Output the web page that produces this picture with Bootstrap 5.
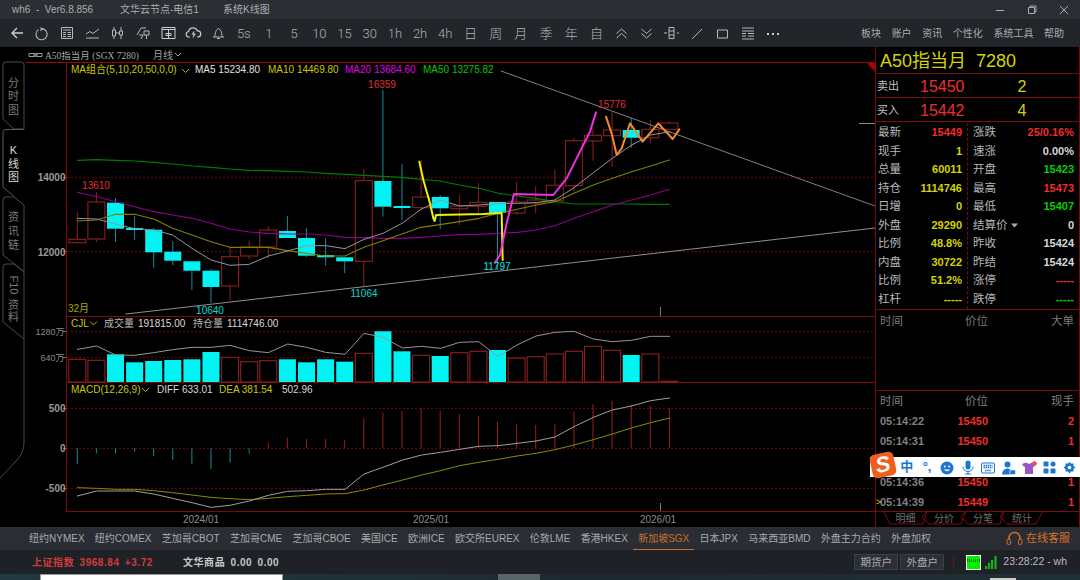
<!DOCTYPE html>
<html lang="zh">
<head>
<meta charset="utf-8">
<title>wh6</title>
<link href="https://cdn.jsdelivr.net/npm/bootstrap@5.3.0/dist/css/bootstrap.min.css" rel="stylesheet">
<style>
html,body{margin:0;background:#000;overflow:hidden}
body{font-family:"Liberation Sans","Noto Sans CJK SC",sans-serif;width:1080px;height:580px}
.wh-root{width:1080px;height:580px;position:relative}
.wh-title{height:19px;background:#2b2e33;color:#a9adb1;font-size:10px;padding-left:12px}
.wh-title .wh-t1{width:108px}.wh-title .wh-t2{width:103px}
.wh-win{width:32px;text-align:center;color:#a9adb1}
.wh-tool{height:28px;background:#22252a;color:#aeb2b6;padding-left:4.5px}
.wh-tb{width:25.2px;text-align:center;font-family:Roboto,"Noto Sans CJK SC",sans-serif;font-weight:300;font-size:13px;line-height:1;flex:none}
.wh-menu{font-size:10px;gap:10.6px;padding-right:16px;color:#a9adb1;padding-top:1px}
.wh-main{height:480px;background:#000}
.wh-chart{width:875px;height:480px;display:block;flex:none}
.wh-chart text{font-family:"Liberation Sans","Noto Sans CJK SC",sans-serif}
.wh-panel{width:205px;height:480px;border-right:1px solid #7d0a0a;flex:none;border-left:1px solid #7d0a0a}
.wh-name{height:26px;color:#d4d400;font-size:18px;line-height:28px;padding-left:4px;white-space:pre}
.wh-quote{height:24px;border-top:1px solid #7d0a0a;color:#c4c4c4;font-size:11px;padding:2px 0 0 1px}
.wh-quote .wh-qp{color:#f02c2c;font-size:16px;padding-left:43px;width:60px;box-sizing:content-box}
.wh-quote .wh-ql{width:0;flex:none;white-space:nowrap}
.wh-quote .wh-qn{color:#d4d400;font-size:16px;width:74px;text-align:center;padding-left:10px}
.wh-stats{height:189px;border-top:1px solid #7d0a0a;border-bottom:1px solid #7d0a0a;padding-top:1px}
.wh-col1{width:92px;border-right:1px dashed #7d0a0a;padding:0 5px 0 2px}
.wh-col2{width:111px;padding:0 5px 0 5px}
.wh-row{height:18.55px;font-size:11.5px;color:#b8b8b8;line-height:18.5px}
.wh-row b{font-size:11px;font-weight:700}
.wh-y{color:#d4d400}.wh-r{color:#f02c2c}.wh-g{color:#00d000}.wh-w{color:#d8d8d8}
.wh-big{height:81px;color:#7a7a7a;font-size:11.5px;padding:3px 5px 0 4px;border-bottom:1px solid #7d0a0a}
.wh-detail{height:120px;color:#808080;font-size:11px;padding:0 5px 0 4px;position:relative}
.wh-head{height:20px;line-height:20px;font-size:11.5px}
.wh-drow{height:20.3px;line-height:20px;font-weight:700;color:#808080}
.wh-tc{width:50px;flex:none}
.wh-pw{width:58px;text-align:right;flex:none}
.wh-qty{margin-left:auto}
.wh-cur{position:absolute;left:0;color:#d4d400;font-size:9px;bottom:2px}
.wh-ptabs{height:16px;display:block;width:203px;flex:none}
.wh-ptabs text{font-family:"Liberation Sans","Noto Sans CJK SC",sans-serif}
.wh-tabs{height:23px;background:#2a2d33;color:#a6aaae;font-size:10px;padding-left:29px;gap:10.3px;white-space:nowrap}
.wh-tab{line-height:23px;height:23px;position:relative}
.wh-on{color:#c9702c;border-bottom:1px solid #c9702c;margin:0 -5px;padding:0 5px}
.wh-online{color:#d8702a;font-size:11px;padding-right:10px;gap:3px}
.wh-status{height:24px;background:#1e2126;font-size:10px;padding-left:32px;white-space:nowrap}
.wh-idx{color:#d43a3a;letter-spacing:.55px;word-spacing:2px;width:151px;font-weight:700}
.wh-com{color:#c8c8c8;letter-spacing:.55px;word-spacing:2px;font-weight:700}
.wh-btn{height:16px;line-height:15px;background:#2c3036;border:1px solid #3c4046;color:#a9adb1;font-size:10.5px;padding:0 5px;margin-right:2px;width:44px;text-align:center}
.wh-sep{width:1px;height:12px;background:#6a1414;margin:0 12px 0 7px}
.wh-time{color:#b8bcc0;font-size:10.5px;padding-right:13px;margin-left:5px}
.wh-strip{height:6px;background:linear-gradient(90deg,#22393f,#1c2a30 55%,#1e2f35);overflow:hidden}
.wh-white{width:243px;height:6px;background:#fff;margin-left:40px;border:1px solid #999;border-bottom:0}
.wh-gray{width:42px;height:6px;background:#58666a;margin-left:215px}
.wh-clock{width:26px;height:2px;margin-left:450px;margin-top:4px;background:#ccc}
.wh-ime{position:absolute;left:870px;top:457px;width:210px;height:20px;background:#fff;gap:0;padding-left:26.500px}
.wh-ime-i{width:20.4px;text-align:center;color:#1b76d2;font-size:13px;font-weight:700;line-height:20px;flex:none}
.wh-logo{position:absolute;left:871px;top:453px;width:24px;height:24px;background:#f0601c;border-radius:5px;transform:rotate(-12deg);color:#fff;font:italic 700 22px/24px "Liberation Sans",sans-serif;text-align:center}
</style>
</head>
<body>
<div class="wh-root d-flex flex-column">

<div class="wh-title d-flex align-items-center flex-none">
  <span class="wh-t1">wh6&nbsp; - &nbsp;Ver6.8.856</span>
  <span class="wh-t2">文华云节点-电信1</span>
  <span>系统K线图</span>
  <span class="ms-auto d-flex">
    <span class="wh-win"><svg width="10" height="10"><path d="M1 5.5H9" stroke="#a9adb1"/></svg></span>
    <span class="wh-win"><svg width="10" height="10"><path d="M1.5 2.5h6v6h-6z M3 2.5V1h6v6H7.5" stroke="#a9adb1" fill="none"/></svg></span>
    <span class="wh-win"><svg width="10" height="10"><path d="M1 1L9 9M9 1L1 9" stroke="#a9adb1"/></svg></span>
  </span>
</div>

<div class="wh-tool d-flex align-items-center">
  <span class="wh-tb"><svg width="14" height="14"><path d="M13 7H2M7 2L2 7L7 12" stroke="#c8ccd0" stroke-width="1.4" fill="none"/></svg></span>
  <span class="wh-tb"><svg width="15" height="15"><path d="M5 1.6L7.6 3.2L5.2 4.6M7 2.6A5.6 5.6 0 1 1 3.3 3.6" stroke="#b4b8bc" fill="none" stroke-width="1.1"/></svg></span>
  <span class="wh-tb"><svg width="14" height="14"><path d="M1.5 1.5h11v11h-11zM3 4h8M3 6.5h3M7.5 6.5H11M3 8.5h3M7.5 8.5H11M3 10.5h3M7.5 10.5H11" stroke="#b4b8bc" fill="none"/></svg></span>
  <span class="wh-tb"><svg width="15" height="14"><path d="M1 8L5 5.5L8 7.5L14 3M1 12H14" stroke="#b4b8bc" fill="none"/></svg></span>
  <span class="wh-tb"><svg width="15" height="14"><path d="M2.5 4h3v6h-3zM4 1v3M4 10v3M9.5 5h3v4h-3zM11 1v4M11 9v4M5.5 7h4" stroke="#b4b8bc" fill="none"/></svg></span>
  <span class="wh-tb"><svg width="15" height="14"><path d="M1 9L5 2H10M3 9H7L5 13M8 5h5v4H8zM10.5 9v4" stroke="#b4b8bc" fill="none"/></svg></span>
  <span class="wh-tb"><svg width="15" height="14"><path d="M1 1.5H14V12.5H1zM1 3.5H14M5 7.5H10V9.5H5zM7.5 4V12" stroke="#c8ccd0" fill="none"/></svg></span>
  <span class="wh-tb"><svg width="17" height="14"><path d="M5 11H3.5A2.8 2.8 0 0 1 3.5 5.5A4.6 4.6 0 0 1 12.4 5A3 3 0 0 1 13 11H12" stroke="#c8ccd0" fill="none" stroke-width="1.2"/><path d="M9.5 4.5L6.5 8.5H8.5L7.5 12.5L11 7.8H9z" fill="#c8ccd0"/></svg></span>
  <span class="wh-tb"><svg width="13" height="14"><path d="M1 11H12M2.5 11C3.5 9.5 2.8 4 6.500 2.500C10.200 4 9.500 9.500 10.500 11M5 12.500H8" stroke="#b4b8bc" fill="none"/></svg></span>
  <span class="wh-tb">5s</span><span class="wh-tb">1</span><span class="wh-tb">5</span><span class="wh-tb">10</span><span class="wh-tb">15</span><span class="wh-tb">30</span><span class="wh-tb">1h</span><span class="wh-tb">2h</span><span class="wh-tb">4h</span><span class="wh-tb">日</span><span class="wh-tb">周</span><span class="wh-tb">月</span><span class="wh-tb">季</span><span class="wh-tb">年</span><span class="wh-tb">自</span>
  <span class="wh-tb"><svg width="13" height="13"><path d="M1.500 6.500L6.500 2L11.500 6.500M1.500 11L6.500 6.500L11.500 11" stroke="#b4b8bc" fill="none"/></svg></span>
  <span class="wh-tb"><svg width="13" height="13"><path d="M1.500 2L6.500 6.500L11.500 2M1.500 6.500L6.500 11L11.500 6.500" stroke="#b4b8bc" fill="none"/></svg></span>
  <span class="wh-tb"><svg width="17" height="14"><path d="M6 1.500h5v11H6zM6 5h5M6 9h5M1 7h3M14 7h2" stroke="#b4b8bc" fill="none"/></svg></span>
  <span class="wh-tb"><svg width="12" height="12"><path d="M1 11L11 1" stroke="#b4b8bc"/></svg></span>
  <span class="wh-tb"><svg width="13" height="12"><path d="M1.500 2h10v8h-10z" stroke="#b4b8bc" fill="none"/></svg></span>
  <span class="wh-tb"><svg width="14" height="13"><path d="M1 1H13M1 4H13M1 6.500H5M7 6.500H13M1 9H5M7 9H13M1 12H13" stroke="#b4b8bc" fill="none"/></svg></span>
  <span class="wh-tb"><svg width="14" height="4"><path d="M1 2H3M6 2H8M11 2H13" stroke="#c8ccd0" stroke-width="2"/></svg></span>
  <div class="wh-menu ms-auto d-flex">
    <span>板块</span><span>账户</span><span>资讯</span><span>个性化</span><span>系统工具</span><span>帮助</span>
  </div>
</div>

<div class="wh-main d-flex">
  <svg id="wh-chart" class="wh-chart" viewBox="0 47 875 480" xmlns="http://www.w3.org/2000/svg">
    <g id="wh-grid"></g>
    <g id="wh-candles"></g>
    <g id="wh-lines"></g>
    <g font-size="10" fill="#b4b4b4">
      <text x="45" y="58.500" font-size="9.500" fill="#a8a8a8" style="font-family:'Liberation Serif','Noto Sans CJK SC',serif">A50指当月 (SGX 7280)</text>
      <text x="153" y="58.500" fill="#a0a0a0">月线</text>
      <path d="M175 53l3 3 3-3" stroke="#a0a0a0" fill="none"/>
      <path d="M29 53.500h6v3h-6zM36 53.500h6v3h-6zM33 55h5" stroke="#9a9a9a" fill="none"/>
      <text x="71" y="73" fill="#c8c800">MA组合(5,10,20,50,0,0)</text>
      <path d="M182 69l3.500 3.500 3.500-3.500" stroke="#b0b000" fill="none"/>
      <text x="195" y="73" fill="#e0e0e0">MA5 15234.80</text>
      <text x="268" y="73" fill="#c8c800">MA10 14469.80</text>
      <text x="345" y="73" fill="#e000e0">MA20 13684.60</text>
      <text x="423" y="73" fill="#00c800">MA50 13275.82</text>
      <text x="382" y="87.500" fill="#e03030" text-anchor="middle">16359</text>
      <text x="96" y="189" fill="#e03030" text-anchor="middle">13610</text>
      <text x="612" y="108" fill="#e03030" text-anchor="middle">15776</text>
      <text x="210" y="313.500" fill="#00d8d8" text-anchor="middle">10640</text>
      <text x="364" y="297" fill="#00d8d8" text-anchor="middle">11064</text>
      <text x="497" y="270" fill="#00e8e8" text-anchor="middle">11797</text>
      <text x="68" y="312" fill="#a8a800">32月</text>
      <g text-anchor="end" font-weight="700" fill="#9a9a9a">
        <text x="65.500" y="181">14000</text><text x="65.500" y="255.500">12000</text>
        <text x="65.500" y="412">500</text><text x="65.500" y="452">0</text><text x="65.500" y="492">-500</text>
      </g>
      <g text-anchor="end" fill="#8a8a8a" font-size="9">
        <text x="64.500" y="334.500">1280万</text><text x="64.500" y="360.500">640万</text>
      </g>
      <text x="71" y="326.500" fill="#c8c800">CJL</text>
      <path d="M90 321.500l3.500 3.500 3.500-3.500" stroke="#b0b000" fill="none"/>
      <text x="104" y="326.500" fill="#b8b8b8">成交量</text><text x="138" y="326.500" fill="#d8d8d8">191815.00</text>
      <text x="193" y="326.500" fill="#b8b8b8">持仓量</text><text x="227" y="326.500" fill="#d8d8d8">1114746.00</text>
      <text x="71" y="392.500" fill="#c8c800">MACD(12,26,9)</text>
      <path d="M142 388l3.500 3.500 3.500-3.500" stroke="#b0b000" fill="none"/>
      <text x="157" y="392.500" fill="#d8d8d8">DIFF 633.01</text>
      <text x="219" y="392.500" fill="#c8c800">DEA 381.54</text>
      <text x="282" y="392.500" fill="#d8d8d8">502.96</text>
      <g text-anchor="middle" fill="#8c8c8c">
        <text x="201" y="523">2024/01</text><text x="431" y="523">2025/01</text><text x="658" y="523">2026/01</text>
      </g>
    </g>
    <g fill="#000" stroke="#4a4a4a">
      <path d="M6 62H21Q24 62 24 65V129H14L3 119V65Q3 62 6 62z"/>
      <path d="M6 197H14L24 205V271.500L3 255V200Q3 197 6 197z"/>
      <path d="M6 264H14L24 272V339L3 322V267Q3 264 6 264z"/>
      <path d="M24 129.500H6Q3 129.500 3 132.500V187L14 196.500" stroke="#5a5a5a"/>
      <path d="M24 339V443Q24 452 17 460L0 478" fill="none"/>
    </g>
    <g font-size="11" text-anchor="middle" fill="#7c7c7c">
      <text x="13.500" y="87">分</text><text x="13.500" y="100">时</text><text x="13.500" y="114">图</text>
      <g fill="#d8d8d8"><text x="13.500" y="154">K</text><text x="13.500" y="168">线</text><text x="13.500" y="181">图</text></g>
      <text x="13.500" y="221">资</text><text x="13.500" y="235">讯</text><text x="13.500" y="249">链</text>
      <text transform="translate(10 285) rotate(90)">F10</text><text x="13.500" y="309">资</text><text x="13.500" y="321">料</text>
    </g>
    <path d="M867 63H875.500V72z" fill="#b00000"/>
  </svg>

  <div class="wh-panel d-flex flex-column">
    <div class="wh-name">A50指当月  7280</div>
    <div class="wh-quote d-flex align-items-center"><span class="wh-ql">卖出</span><span class="wh-qp">15450</span><span class="wh-qn">2</span></div>
    <div class="wh-quote d-flex align-items-center"><span class="wh-ql">买入</span><span class="wh-qp">15442</span><span class="wh-qn">4</span></div>
    <div class="wh-stats d-flex">
      <div class="wh-col1">
        <div class="wh-row d-flex justify-content-between"><span>最新</span><b class="wh-r">15449</b></div>
        <div class="wh-row d-flex justify-content-between"><span>现手</span><b class="wh-y">1</b></div>
        <div class="wh-row d-flex justify-content-between"><span>总量</span><b class="wh-y">60011</b></div>
        <div class="wh-row d-flex justify-content-between"><span>持仓</span><b class="wh-y">1114746</b></div>
        <div class="wh-row d-flex justify-content-between"><span>日增</span><b class="wh-y">0</b></div>
        <div class="wh-row d-flex justify-content-between"><span>外盘</span><b class="wh-y">29290</b></div>
        <div class="wh-row d-flex justify-content-between"><span>比例</span><b class="wh-y">48.8%</b></div>
        <div class="wh-row d-flex justify-content-between"><span>内盘</span><b class="wh-y">30722</b></div>
        <div class="wh-row d-flex justify-content-between"><span>比例</span><b class="wh-y">51.2%</b></div>
        <div class="wh-row d-flex justify-content-between"><span>杠杆</span><b class="wh-y">-----</b></div>
      </div>
      <div class="wh-col2">
        <div class="wh-row d-flex justify-content-between"><span>涨跌</span><b class="wh-r">25/0.16%</b></div>
        <div class="wh-row d-flex justify-content-between"><span>速涨</span><b class="wh-w">0.00%</b></div>
        <div class="wh-row d-flex justify-content-between"><span>开盘</span><b class="wh-g">15423</b></div>
        <div class="wh-row d-flex justify-content-between"><span>最高</span><b class="wh-r">15473</b></div>
        <div class="wh-row d-flex justify-content-between"><span>最低</span><b class="wh-g">15407</b></div>
        <div class="wh-row d-flex justify-content-between"><span>结算价 <svg width="7" height="5"><path d="M0 0.500H7L3.500 4.500z" fill="#a8a8a8"/></svg></span><b class="wh-w">0</b></div>
        <div class="wh-row d-flex justify-content-between"><span>昨收</span><b class="wh-w">15424</b></div>
        <div class="wh-row d-flex justify-content-between"><span>昨结</span><b class="wh-w">15424</b></div>
        <div class="wh-row d-flex justify-content-between"><span>涨停</span><b class="wh-r">-----</b></div>
        <div class="wh-row d-flex justify-content-between"><span>跌停</span><b class="wh-g">-----</b></div>
      </div>
    </div>
    <div class="wh-big d-flex"><span class="wh-tc">时间</span><span class="wh-pw">价位</span><span class="wh-qty">大单</span></div>
    <div class="wh-detail">
      <div class="wh-head d-flex"><span class="wh-tc">时间</span><span class="wh-pw">价位</span><span class="wh-qty">现手</span></div>
      <div class="wh-drow d-flex"><span class="wh-tc">05:14:22</span><span class="wh-pw wh-r">15450</span><span class="wh-r wh-qty">2</span></div>
      <div class="wh-drow d-flex"><span class="wh-tc">05:14:31</span><span class="wh-pw wh-r">15450</span><span class="wh-r wh-qty">1</span></div>
      <div class="wh-drow d-flex"><span class="wh-tc">05:14:33</span><span class="wh-pw wh-r">15449</span><span class="wh-r wh-qty">1</span></div>
      <div class="wh-drow d-flex"><span class="wh-tc">05:14:36</span><span class="wh-pw wh-r">15450</span><span class="wh-r wh-qty">1</span></div>
      <div class="wh-drow d-flex"><span class="wh-tc">05:14:39</span><span class="wh-pw wh-r">15449</span><span class="wh-r wh-qty">1</span></div>
      <span class="wh-cur">&gt;</span>
    </div>
    <svg class="wh-ptabs" viewBox="0 0 203 16">
      <path d="M0 .5H203" stroke="#7d0a0a"/>
      <path d="M7.500 0L14 13H47L51 0M51 0L46 6L53 13H85L90 0M90 0L85 6L92 13H124L128 0M128 0L124 6L131 13H160L167 0" fill="none" stroke="#7d0a0a"/>
      <g font-size="10" fill="#6e6e6e" text-anchor="middle"><text x="29.500" y="10.500">明细</text><text x="68" y="10.500">分价</text><text x="107" y="10.500">分笔</text><text x="146" y="10.500">统计</text></g>
    </svg>
  </div>
</div>

<div class="wh-tabs d-flex align-items-start">
  <span class="wh-tab">纽约NYMEX</span><span class="wh-tab">纽约COMEX</span><span class="wh-tab">芝加哥CBOT</span><span class="wh-tab">芝加哥CME</span><span class="wh-tab">芝加哥CBOE</span><span class="wh-tab">美国ICE</span><span class="wh-tab">欧洲ICE</span><span class="wh-tab">欧交所EUREX</span><span class="wh-tab">伦敦LME</span><span class="wh-tab">香港HKEX</span><span class="wh-tab wh-on">新加坡SGX</span><span class="wh-tab">日本JPX</span><span class="wh-tab">马来西亚BMD</span><span class="wh-tab">外盘主力合约</span><span class="wh-tab">外盘加权</span>
  <span class="wh-online ms-auto d-flex align-items-center wh-tab">
    <svg width="17" height="15"><path d="M3 9V7A5.500 5.500 0 0 1 14 7V9" stroke="#d8702a" fill="none" stroke-width="1.400"/><rect x="1" y="8" width="3.500" height="5.500" rx="1.500" stroke="#d8702a" fill="none"/><rect x="12.500" y="8" width="3.500" height="5.500" rx="1.500" stroke="#d8702a" fill="none"/></svg>
    在线客服</span>
</div>

<div class="wh-status d-flex align-items-center">
  <span class="wh-idx">上证指数 3968.84 +3.72</span>
  <span class="wh-com">文华商品 0.00 0.00</span>
  <span class="wh-btn ms-auto">期货户</span><span class="wh-btn">外盘户</span>
  <span class="wh-sep"></span>
  <svg width="15" height="15"><rect width="15" height="15" fill="#fff"/><rect x="1" y="1" width="13" height="13" fill="#00f000"/><path d="M1 5.500H14" stroke="#0a7a0a" stroke-width="3" stroke-dasharray="1 1"/></svg>
  <svg class="ms-1" width="13" height="15"><path d="M1 11v3M4 8v6M7 5v9M10.500 1v13" stroke="#17b017" stroke-width="2.200"/></svg>
  <span class="wh-time">23:28:22 - wh</span>
</div>

<div class="wh-strip d-flex">
  <div class="wh-white"></div><div class="wh-gray"></div><div class="wh-clock"></div>
</div>

<div class="wh-ime d-flex">
  <span class="wh-ime-i">中</span>
  <span class="wh-ime-i">°,</span>
  <span class="wh-ime-i"><svg width="14" height="14"><circle cx="7" cy="7" r="6.500" fill="#1b76d2"/><circle cx="4.800" cy="5.500" r="1" fill="#fff"/><circle cx="9.200" cy="5.500" r="1" fill="#fff"/><path d="M3.800 8.500Q7 12 10.200 8.500z" fill="#fff"/></svg></span>
  <span class="wh-ime-i"><svg width="12" height="15"><rect x="3.500" y="0.500" width="5" height="9" rx="2.500" fill="#1b76d2"/><path d="M1 6.500A5 5 0 0 0 11 6.500M6 11.500V14M3 14H9" stroke="#1b76d2" fill="none"/></svg></span>
  <span class="wh-ime-i"><svg width="14" height="12"><rect x="0.500" y="1" width="13" height="10" rx="1" fill="none" stroke="#1b76d2"/><path d="M2.500 3.500H11.500M2.500 5.500H11.500M4 8.500H10" stroke="#1b76d2" stroke-dasharray="1.500 .6" stroke-width="1.300"/></svg></span>
  <span class="wh-ime-i"><svg width="14" height="14"><circle cx="5.500" cy="3.500" r="3" fill="#1b76d2"/><path d="M0 13.500A5.500 6 0 0 1 11 13.500z" fill="#1b76d2"/><rect x="8" y="9" width="5.500" height="4.500" fill="#1b76d2" stroke="#fff" stroke-width=".6"/></svg></span>
  <span class="wh-ime-i"><svg width="16" height="14"><path d="M1 3L5 1.500L8 3L11 1.500L15 3L13 6L12 5.500V13H4V5.500L3 6z" fill="#9a55c8"/><circle cx="13.500" cy="2.500" r="2.300" fill="#f05030"/></svg></span>
  <span class="wh-ime-i"><svg width="13" height="13"><rect x="0.500" y="0.500" width="5" height="5" rx="1" fill="#1b76d2"/><rect x="7.500" y="0.500" width="5" height="5" rx="2.500" fill="#1b76d2"/><rect x="0.500" y="7.500" width="5" height="5" rx="1" fill="#1b76d2"/><rect x="7.500" y="7.500" width="5" height="5" rx="1" fill="#1b76d2"/></svg></span>
  <span class="wh-ime-i"><svg width="13" height="13"><path d="M6.500 1L8 2.500L10.500 2.500L10.500 5L12.500 6.500L10.500 8L10.500 10.500L8 10.500L6.500 12.500L5 10.500L2.500 10.500L2.500 8L.5 6.500L2.500 5L2.500 2.500L5 2.500z" fill="#1b76d2"/><circle cx="6.500" cy="6.500" r="1.800" fill="#fff"/></svg></span>
</div>
<div class="wh-logo">S</div>
</div>

<script src="https://cdn.jsdelivr.net/npm/bootstrap@5.3.0/dist/js/bootstrap.bundle.min.js"></script>
<script>
(function(){
var NS='http://www.w3.org/2000/svg';
function el(p,t,a){var e=document.createElementNS(NS,t);for(var k in a)e.setAttribute(k,a[k]);p.appendChild(e);return e;}
var G=document.getElementById('wh-grid'),C=document.getElementById('wh-candles'),L=document.getElementById('wh-lines');
var RED='#7d0a0a',DOT='#6a0404';
function h(y,x1,x2,c,d){var a={x1:x1,x2:x2,y1:y,y2:y,stroke:c};if(d)a['stroke-dasharray']=d;el(G,'line',a);}
function v(x,y1,y2,c){el(G,'line',{x1:x,x2:x,y1:y1,y2:y2,stroke:c});}
h(62.5,25,875,'#8a0a0a');h(316.5,66,875,RED);h(382.5,66,875,RED);h(511.5,66,875,RED);v(66.5,62,511,RED);
[177.5,251.5,331.5,357.5,408.5,448.5,488.5].forEach(function(y){h(y,67,875,DOT,'2 2');});
[177.5,251.5,331.5,357.5,408.5,448.5,488.5].forEach(function(y){h(y,63,66,'#777');});
v(660.5,307,316,'#777');v(660.5,503,511,'#777');h(123.5,859,875,'#888');
// candles: centre step 19.1
var D=[[239.3,242.7,212,244,1],[202,239,192,242,1],[202.7,228.7,198,242,0],[228,230,216,240,0],[229.7,252.3,228,268,0],[251.7,260.7,241,265,0],[261.3,270.7,260.7,290,0],[270.7,287,269,303,0],[256.7,286,248,300,1],[247,256,240.7,259,1],[230,247,226,258,1],[231,238,216,238,0],[238,255.7,228,257,0],[255,257.3,238,265.7,0],[257.3,261.3,257,273,0],[180.7,261.3,169,287,1],[181,206.7,90,216.7,0],[206,208,164,220,0],[197,207.7,160,210,1],[197,208.3,195,229,0],[206,208.7,195,225,1],[202.3,206.3,183,213,1],[202,213,202,270,0],[202,213,181.7,215,1],[200,203,186,213,1],[185.3,200.7,170,200,1],[140.700,185.700,138,191.700,1],[135.300,141,128,160.700,1],[130,135.700,111.700,166.700,1],[130,137.700,118,148,0],[129.300,137.700,120,143,1],[123,129.300,121,129.300,1]];
var VOL=[359.3,360.3,354.3,362.3,361,360,359.3,352,357.3,361.7,360.7,359.3,362.3,359.3,361.7,353.3,331.3,351.3,355.3,356,352.7,351.3,350,358,356.7,354,351.3,346.3,350.3,355,354,381.3];
var HIST=[462,430,430,425,438,450,462,477,458,431,400,383,387,387,391,325,308,303,295,303,312,318,336,341,345,341,305,283,273,283,288,295];
function cx(i){return 77.3+i*19.1;}
var CR='#8c2020',CW='#0b8f96',CY='#00f4f4';
D.forEach(function(d,i){
  var x=cx(i),up=d[4],wc=up?CR:CW;
  el(C,'line',{x1:x,x2:x,y1:d[2],y2:d[0],stroke:wc});
  el(C,'line',{x1:x,x2:x,y1:d[1],y2:d[3],stroke:wc});
  el(C,'rect',up?{x:x-8.5,y:d[0],width:17,height:d[1]-d[0],fill:'#000',stroke:CR,'stroke-width':1.1}:{x:x-8.5,y:d[0],width:17,height:d[1]-d[0],fill:CY});
  var vt=VOL[i];
  el(C,'rect',up?{x:x-8.5,y:vt,width:17,height:382-vt,fill:'#000',stroke:CR,'stroke-width':1.1}:{x:x-8.5,y:vt,width:17,height:382-vt,fill:CY});
  var hy=310+HIST[i]/3;
  el(C,'line',{x1:x,x2:x,y1:448.3,y2:hy,stroke:hy<448?'#982020':CW});
});
function P(pts,c,w){el(L,'polyline',{points:pts.map(function(p){return p[0]+','+p[1];}).join(' '),fill:'none',stroke:c,'stroke-width':w||1,'stroke-linejoin':'round','stroke-linecap':'round'});}
function Z(ox,oy,a){return a.map(function(p){return [ox+p[0]/3,oy+p[1]/3];});}
// trend lines
P([[501,71],[875,206]],'#808080');P([[126,314],[875,228]],'#909090');
// MA
P(Z(60,120,[[52,121],[110,119],[167,121],[224,123],[281,127],[338,132],[396,138],[453,142],[510,147],[568,151],[625,152],[683,154],[740,156],[797,160],[855,163],[912,166],[969,169],[1026,172],[1083,178],[1140,183]]).concat(Z(400,90,[[178,285],[237,295],[295,310],[352,318],[408,325],[465,335],[522,342],[580,342],[637,342],[695,342],[752,343],[808,343]])),'#007c00',1.1);
P(Z(60,120,[[52,217],[110,230],[167,245],[224,260],[281,275],[338,285],[396,295],[453,310],[510,327],[568,336],[625,340],[683,342],[740,342],[797,345],[855,352],[912,353],[969,355],[1026,355],[1083,352],[1140,348]]).concat(Z(400,90,[[178,434],[237,433],[295,430],[352,427],[408,420],[465,407],[522,385],[580,365],[637,345],[695,330],[752,315],[808,298]])),'#900090',1.1);
P(Z(60,120,[[52,303],[110,300],[167,283],[224,283],[281,297],[338,325],[396,345],[453,365],[510,382],[568,382],[625,382],[683,392],[740,400],[797,408],[855,408],[912,382],[969,362],[1026,342],[1083,322],[1140,314]]).concat(Z(400,90,[[178,395],[237,385],[295,370],[352,358],[408,345],[465,335],[522,310],[580,285],[637,265],[695,245],[752,228],[808,210]])),'#808000',1.1);
P(Z(60,120,[[52,295],[110,297],[167,312],[224,326],[281,330],[338,345],[396,385],[453,420],[510,436],[568,433],[625,408],[683,393],[740,377],[797,377],[855,386],[912,358],[969,340],[1026,310],[1083,268],[1140,240]]).concat(Z(400,90,[[178,348],[237,345],[295,340],[352,340],[408,338],[465,330],[522,293],[580,248],[637,205],[695,165],[752,135],[810,125]])),'#969696',1);
// hand drawn
P(Z(400,90,[[58,215],[70,270],[90,340],[100,385],[104,393],[108,375],[250,372],[305,369],[308,510]]),'#f0f000',2);
P(Z(400,90,[[285,518],[300,495],[320,400],[342,312],[460,315],[500,265],[570,125],[588,67]]),'#f030e0',2);
P(Z(400,90,[[618,80],[635,130],[650,195],[665,175],[690,100],[728,155],[775,100],[818,147],[838,118]]),'#f08a30',2);
// volume line and macd
P(Z(60,310,[[52,118],[110,108],[167,135],[224,136],[281,128],[338,119],[396,112],[453,112],[510,106],[568,122],[625,128],[683,102],[740,112],[797,127],[855,133],[912,70],[969,82]]).concat(Z(380,310,[[68,114],[125,109],[182,115],[239,97],[296,95],[354,140],[411,105],[468,78],[525,67],[582,64],[640,87],[697,95],[754,91],[812,79],[869,79]])),'#969696');
P(Z(60,310,[[52,533],[110,535],[167,538],[224,538],[281,542],[338,548],[396,555],[453,562],[510,566],[568,569],[625,565],[683,560],[740,556],[797,552],[855,551],[912,540],[969,525]]).concat(Z(380,310,[[68,510],[125,495],[182,482],[239,467],[296,457],[354,448],[411,438],[468,430],[525,419],[582,405],[640,389],[697,372],[754,354],[812,338],[869,324]])),'#8c8c00');
P(Z(60,310,[[52,558],[110,543],[167,543],[224,543],[281,552],[338,565],[396,578],[453,592],[510,586],[568,573],[625,556],[683,544],[740,542],[797,538],[855,538],[912,492],[969,472]]).concat(Z(380,310,[[68,450],[125,435],[182,427],[239,418],[296,409],[354,407],[411,400],[468,393],[525,381],[582,350],[640,322],[697,300],[754,288],[812,272],[869,264]])),'#a0a0a0');
})();
</script>
</body>
</html>
